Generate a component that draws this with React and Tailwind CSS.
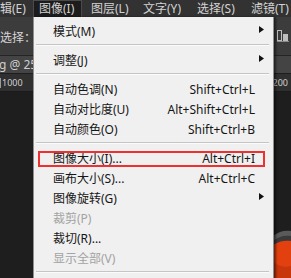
import React from "react";

const Arrow = () => (
  <svg width="5" height="7" viewBox="0 0 5 7" className="shrink-0 mb-[5px]">
    <polygon points="0,0 5,3.5 0,7" fill="#111" />
  </svg>
);

const Item = ({ label, shortcut, arrow, disabled }) => (
  <div
    className={`flex h-[20px] items-center justify-between pt-[2px] pl-[19px] ${
      arrow ? "pr-[9px]" : "pr-[18px]"
    } ${disabled ? "text-[#a3a3a3]" : "text-[#161616]"}`}
  >
    <span className="whitespace-nowrap">{label}</span>
    {shortcut && <span className="whitespace-nowrap">{shortcut}</span>}
    {arrow && <Arrow />}
  </div>
);

const Sep = () => (
  <div className="h-[9px] pt-[3px] pl-[2px] pr-[4px]">
    <div className="h-px bg-[#c5c5c5]" />
    <div className="h-px bg-[#fbfbfb]" />
  </div>
);

export default function App() {
  return (
    <div className="relative w-[291px] h-[278px] overflow-hidden bg-[#202020] font-['Noto_Sans','Noto_Sans_CJK_SC',sans-serif] text-[12px] leading-none flex flex-col">
      {/* menu bar */}
      <div className="flex h-[17px] shrink-0 items-center bg-[#323232] text-[#d2d2d2] whitespace-nowrap">
        <span className="ml-[-12px] w-[45px] shrink-0">编辑(E)</span>
        <div className="flex h-full w-[49px] shrink-0 items-center border border-[#4a4a4a] border-b-0 bg-[#1c1c1c] pl-[5px]">
          图像(I)
        </div>
        <span className="ml-[9px] w-[43px] shrink-0">图层(L)</span>
        <span className="ml-[9px] w-[45px] shrink-0">文字(Y)</span>
        <span className="ml-[9px] w-[45px] shrink-0">选择(S)</span>
        <span className="ml-[9px] shrink-0">滤镜(T)</span>
      </div>

      {/* options bar */}
      <div className="flex h-[39px] shrink-0 items-center justify-between border-b border-[#252525] bg-[#3c3c3c] pt-[4px] text-[#d6d6d6]">
        <span className="whitespace-nowrap">选择：</span>
        <svg width="12" height="12" viewBox="0 0 12 12" className="mr-[2px] mb-[4px]">
          <rect x="0.5" y="0.5" width="4" height="10" fill="none" stroke="#bdbdbd" />
          <rect x="6" y="4" width="5" height="7" fill="#bdbdbd" />
          <rect x="0" y="11" width="12" height="1" fill="#8a8a8a" />
        </svg>
      </div>

      {/* tab row */}
      <div className="flex h-[18px] shrink-0 items-center border-b border-[#1e1e1e] bg-[#444444] text-[12px] text-[#cfcfcf]">
        <span className="ml-[-1px] whitespace-nowrap">g @ 25%</span>
      </div>

      {/* ruler */}
      <div className="flex h-[18px] shrink-0 items-center justify-between border-b border-[#1a1a1a] bg-[#303030] text-[9px] text-[#cfcfcf]">
        <div className="flex items-center">
          <div className="h-[10px] w-px bg-[#9a9a9a]" />
          <span className="ml-[1px]">1000</span>
        </div>
        <span className="mr-[3px]">200</span>
      </div>

      {/* canvas */}
      <div className="flex flex-1 items-end justify-end bg-[#1e1e1e]">
        <svg width="18" height="56" viewBox="0 0 18 56">
          <path d="M0,14 C6,9 12,8 18,9 L18,56 L0,56 Z" fill="#5a5a5a" />
          <path d="M0,19 C6,14 12,13 18,14 L18,56 L0,56 Z" fill="#3a3a3a" />
          <path d="M0,23 C6,19 12,18 18,19 L18,56 L0,56 Z" fill="#e2400f" />
          <path d="M0,40 C6,44 12,46 18,44 L18,56 L0,56 Z" fill="#c8360c" />
        </svg>
      </div>

      {/* dropdown menu */}
      <div className="absolute left-[33px] top-[17px] w-[241px] h-[270px] border-x border-[#8f8f8f] bg-[#f0f0f0] pt-[4px] shadow-[2px_0_2px_rgba(0,0,0,0.5)]">
        <Item label="模式(M)" arrow />
        <Sep />
        <Item label="调整(J)" arrow />
        <Sep />
        <Item label="自动色调(N)" shortcut="Shift+Ctrl+L" />
        <Item label="自动对比度(U)" shortcut="Alt+Shift+Ctrl+L" />
        <Item label="自动颜色(O)" shortcut="Shift+Ctrl+B" />
        <Sep />
        <Item label="图像大小(I)..." shortcut="Alt+Ctrl+I" />
        <Item label="画布大小(S)..." shortcut="Alt+Ctrl+C" />
        <Item label="图像旋转(G)" arrow />
        <Item label="裁剪(P)" disabled />
        <Item label="裁切(R)..." />
        <Item label="显示全部(V)" disabled />
        <Sep />
      </div>

      {/* red annotation box */}
      <div className="absolute left-[38px] top-[151px] h-[16px] w-[227px] border-2 border-[#f03030]" />
    </div>
  );
}
